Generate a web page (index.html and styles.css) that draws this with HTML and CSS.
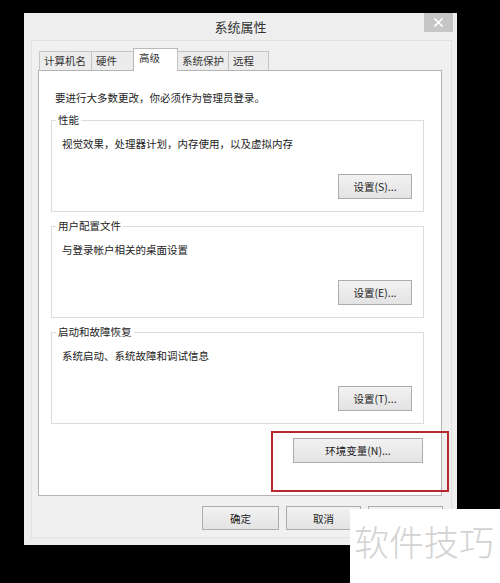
FILE: index.html
```html
<!DOCTYPE html>
<html lang="zh-CN">

<head>
    <meta charset="UTF-8">
    <meta name="viewport" content="width=device-width, initial-scale=1.0">
    <title>系统属性</title>
    <link rel="stylesheet" href="styles.css">
</head>

<body>
    <div class="window">
        <div class="titlebar">
            <span></span>
            <div class="title">系统属性</div>
            <button class="close-btn" aria-label="关闭">
                <svg width="9" height="9" viewBox="0 0 9 9">
                    <path d="M1 1 L8 8 M8 1 L1 8" stroke="#fff" stroke-width="1.6" stroke-linecap="square"/>
                </svg>
            </button>
        </div>

        <div class="client">
            <div class="tabs">
                <div class="tab tab-name">计算机名</div>
                <div class="tab tab-hw">硬件</div>
                <div class="tab tab-adv active">高级</div>
                <div class="tab tab-prot">系统保护</div>
                <div class="tab tab-remote">远程</div>
            </div>

            <div class="tab-panel">
                <p class="intro">要进行大多数更改，你必须作为管理员登录。</p>

                <div class="group">
                    <span class="group-title">性能</span>
                    <div class="group-desc">视觉效果，处理器计划，内存使用，以及虚拟内存</div>
                    <button class="btn">设置(S)...</button>
                </div>

                <div class="group">
                    <span class="group-title">用户配置文件</span>
                    <div class="group-desc">与登录帐户相关的桌面设置</div>
                    <button class="btn">设置(E)...</button>
                </div>

                <div class="group">
                    <span class="group-title">启动和故障恢复</span>
                    <div class="group-desc">系统启动、系统故障和调试信息</div>
                    <button class="btn">设置(T)...</button>
                </div>

                <div class="env-row">
                    <button class="btn btn-env">环境变量(N)...</button>
                    <div class="highlight"></div>
                </div>
            </div>

            <div class="dialog-buttons">
                <button class="btn btn-dialog">确定</button>
                <button class="btn btn-dialog">取消</button>
                <button class="btn btn-dialog" disabled></button>
            </div>
        </div>
    </div>

    <div class="watermark">软件技巧</div>
</body>

</html>
```

FILE: styles.css
```css
body, html {
    margin: 0;
    padding: 0;
    height: 100%;
    overflow: hidden;
    background: #000;
    font-family: "Noto Sans CJK SC", "Liberation Sans", sans-serif;
    font-size: 10.5px;
    color: #222;
}

body {
    position: relative;
}

.window {
    margin: 13px 0 0 24px;
    width: 433px;
    height: 532px;
    background: #eeeeee;
    display: flex;
    flex-direction: column;
}

.titlebar {
    height: 27px;
    flex-shrink: 0;
    display: grid;
    grid-template-columns: 1fr auto 1fr;
}

.title {
    font-size: 13px;
    line-height: 27px;
    color: #333;
}

.close-btn {
    justify-self: end;
    align-self: start;
    margin-right: 4px;
    width: 29px;
    height: 19px;
    border: none;
    padding: 0;
    background: #c6c6c6;
    display: flex;
    align-items: center;
    justify-content: center;
}

/* client area with the tab control */
.client {
    margin: 0 5px 0 7px;
    height: 498px;
    box-sizing: border-box;
    border: 1px solid #e0e0e0;
    background: #f0f0f0;
    padding: 7px 9px 0 6px;
}

.tabs {
    display: flex;
    align-items: flex-end;
    height: 22px;
    padding-left: 1px;
    position: relative;
    z-index: 1;
}

.tab {
    height: 19px;
    box-sizing: border-box;
    border: 1px solid #c4c4c4;
    border-bottom: none;
    background: #ececec;
    padding-left: 4px;
    line-height: 18px;
    margin-left: -1px;
    color: #333;
}

.tab:first-child {
    margin-left: 0;
}

.tab-name { width: 53px; }
.tab-hw { width: 43px; }
.tab-adv { width: 45px; }
.tab-prot { width: 52px; }
.tab-remote { width: 41px; }

.tab.active {
    height: 23px;
    margin-bottom: -1px;
    background: #fff;
    border-color: #b9b9b9;
    padding-left: 5px;
    line-height: 18px;
}

.tab-panel {
    height: 426px;
    box-sizing: border-box;
    border: 1px solid #b4b4b4;
    background: #fff;
    padding: 0 17px 0 12px;
    display: flex;
    flex-direction: column;
}

.intro {
    margin: 19px 0 0 4px;
    line-height: 16px;
}

.group {
    position: relative;
    height: 92px;
    box-sizing: border-box;
    border: 1px solid #dcdcdc;
    margin-top: 14px;
    padding: 15px 11px 12px 10px;
    display: flex;
    flex-direction: column;
    justify-content: space-between;
}

.intro + .group {
    margin-top: 14px;
}

.group:last-of-type {
    margin-top: 15px;
}

.group-title {
    position: absolute;
    top: -9px;
    left: 4px;
    padding: 0 2px;
    background: #fff;
    line-height: 16px;
}

.group-desc {
    line-height: 16px;
}

.btn {
    font-family: inherit;
    font-size: 10.5px;
    color: #222;
    border: 1px solid #acacac;
    background: linear-gradient(#f2f2f2, #e3e3e3);
    padding: 0;
    box-sizing: border-box;
}

.group .btn {
    align-self: flex-end;
    width: 74px;
    height: 25px;
}

.env-row {
    position: relative;
    align-self: flex-end;
    margin: 14px 1px 0 0;
}

.btn-env {
    display: block;
    width: 130px;
    height: 25px;
}

/* red frame drawn around the env button */
.highlight {
    position: absolute;
    left: -22px;
    top: -7px;
    width: 178px;
    height: 61px;
    box-sizing: border-box;
    border: 2px solid #b8262e;
}

.dialog-buttons {
    display: flex;
    justify-content: flex-end;
    gap: 7px;
    margin: 10px -1px 0 0;
}

.btn-dialog {
    width: 75px;
    height: 24px;
}

.btn-dialog:first-child {
    width: 77px;
}

.watermark {
    position: absolute;
    left: 350px;
    top: 509px;
    width: 150px;
    height: 74px;
    background: #fff;
    color: #d2d2d2;
    font-size: 35px;
    font-weight: 300;
    line-height: 64px;
    padding-left: 4px;
    box-sizing: border-box;
    white-space: nowrap;
}
```
